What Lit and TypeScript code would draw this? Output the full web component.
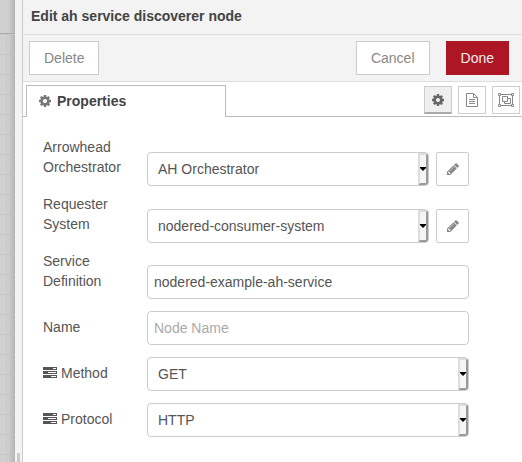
import { LitElement, html, css } from "lit";
import { customElement } from "lit/decorators.js";

const GEAR =
  "M1024 896q0-106-75-181t-181-75-181 75-75 181 75 181 181 75 181-75 75-181zm512-109v222q0 12-8 23t-20 13l-185 28q-19 54-39 91 35 50 107 138 10 12 10 25t-9 23q-27 37-99 108t-94 71q-12 0-26-9l-138-108q-44 23-91 38-16 136-29 186-7 28-36 28h-222q-14 0-24.500-8.500t-11.500-21.500l-28-184q-49-16-90-37l-141 107q-10 9-25 9-14 0-25-11-126-114-165-168-7-10-7-23 0-12 8-23 15-21 51-66.500t54-70.500q-27-50-41-99l-183-27q-13-2-21-12.500t-8-23.500v-222q0-12 8-23t19-13l186-28q14-46 39-92-40-57-107-138-10-12-10-24 0-10 9-23 26-36 98.500-107.500t94.500-71.500q13 0 26 10l138 107q44-23 91-38 16-136 29-186 7-28 36-28h222q14 0 24.500 8.500t11.500 21.500l28 184q49 16 90 37l142-107q9-9 24-9 13 0 25 10 129 119 165 170 7 8 7 22 0 12-8 23-15 21-51 66.500t-54 70.500q26 50 41 98l183 28q13 2 21 12.500t8 23.500z";

const PENCIL =
  "M491 1536l91-91-235-235-91 91v107h128v128h107zm523-928q0-22-22-22-10 0-17 7l-542 542q-7 7-7 17 0 22 22 22 10 0 17-7l542-542q7-7 7-17zm-54-192l416 416-832 832h-416v-416zm683 96q0 53-37 90l-166 166-416-416 166-165q36-38 90-38 53 0 91 38l235 234q37 39 37 91z";

const gear = html`<svg class="gear" viewBox="0 128 1536 1536" aria-hidden="true"><path d=${GEAR} /></svg>`;

const doc = html`<svg class="doc" viewBox="0 0 12 14" aria-hidden="true">
  <path class="line" d="M.5 .5H7.500L11.500 4.500V13.500H.5ZM7.500 .5V4.500H11.500M3 6.500H9M3 8.500H9M3 10.500H9" />
</svg>`;

const group = html`<svg class="group" viewBox="0 0 16 14" aria-hidden="true">
  <path class="line" d="M2.500 1.500H13.500M2.500 12.500H13.500M1.500 2.500V11.500M14.500 2.500V11.500M.5 .5H2.500V2.500H.5ZM13.500 .5H15.500V2.500H13.500ZM.5 11.500H2.500V13.500H.5ZM13.500 11.500H15.500V13.500H13.500ZM4.500 3.500H9.500V8.500H4.500ZM9.500 5.500H12.500V10.500H6.500V8.500" />
</svg>`;

const pencil = html`<svg class="pencil" viewBox="0 0 1792 1792" aria-hidden="true"><path d=${PENCIL} /></svg>`;

const tasks = html`<svg class="tasks" viewBox="0 0 14 11" aria-hidden="true">
  <path fill-rule="evenodd" d="M0 0H14V3H0ZM10 1V2H13V1ZM0 4H14V7H0ZM5 5V6H13V5ZM0 8H14V11H0ZM8 9V10H13V9Z" />
</svg>`;

@customElement("app-root")
export class AppRoot extends LitElement {
  static styles = css`
    :host {
      display: flex;
      min-height: 100vh;
      background: #fff;
      color: #555;
      font: 14px/20px "Liberation Sans", Arial, sans-serif;
    }
    * {
      box-sizing: border-box;
    }
    svg {
      fill: currentColor;
      flex: none;
    }
    .line {
      fill: none;
      stroke: currentColor;
    }
    button,
    input,
    select {
      font: inherit;
      color: inherit;
      margin: 0;
      background: #fff;
      border: 1px solid #ccc;
    }
    .workspace {
      width: 15px;
      flex: none;
      display: flex;
      flex-direction: column;
      background: linear-gradient(90deg, transparent 8px, #0002), #d0d0d0;
    }
    .workspace-tabs {
      height: 34px;
      border-bottom: 1px solid #aaa;
    }
    .canvas {
      flex: 1;
      background:
        linear-gradient(90deg, #c6c6c6 1px, transparent 1px) 6px 0 / 20px 20px,
        linear-gradient(#c6c6c6 1px, transparent 1px) 0 0 / 20px 20px;
    }
    .separator {
      width: 8px;
      flex: none;
      display: flex;
      flex-direction: column;
      justify-content: flex-end;
      padding-left: 2px;
      background: #f3f3f3;
      border-right: 1px solid #ccc;
    }
    .grip {
      width: 3px;
      height: 16px;
      background: #ccc;
    }
    .tray {
      flex: 1;
      min-width: 0;
    }
    h1 {
      margin: 0;
      padding: 6px 8px 8px;
      font-size: 14px;
      line-height: 20px;
      color: #444;
      background: #f3f3f3;
      border-bottom: 1px solid #ddd;
    }
    .toolbar {
      display: flex;
      gap: 16px;
      padding: 6px 13px 6px 6px;
      background: #f3f3f3;
      border-bottom: 1px solid #ddd;
    }
    .toolbar button {
      height: 34px;
      padding: 0 14px;
      color: #888;
    }
    .toolbar .delete {
      margin-right: auto;
    }
    .toolbar .done {
      color: #eee;
      background: #ad1625;
      border-color: #ad1625;
    }
    .tabs {
      display: flex;
      align-items: flex-start;
      padding: 3px 2px 0 3px;
      box-shadow: inset 0 -1px #bbb;
    }
    .tab {
      width: 200px;
      height: 32px;
      display: flex;
      align-items: center;
      gap: 6px;
      padding: 0 12px 2px;
      font-weight: bold;
      color: #444;
      border-color: #bbb;
      border-bottom: none;
      margin-right: auto;
    }
    .tab svg {
      color: #777;
    }
    .tool {
      width: 28px;
      height: 28px;
      margin: 1px 0 0 6px;
      padding: 0;
      display: grid;
      place-items: center;
      color: #888;
    }
    .tool.selected {
      color: #666;
      background: #efefef;
      border-bottom: 2px solid #aaa;
    }
    .gear {
      width: 12px;
      height: 12px;
    }
    .doc {
      width: 12px;
      height: 14px;
    }
    .group {
      width: 16px;
      height: 14px;
    }
    .pencil {
      width: 14px;
      height: 14px;
    }
    .tasks {
      width: 14px;
      height: 11px;
      margin-right: 4px;
    }
    form {
      padding: 20px 53px 20px 20px;
    }
    .row {
      display: flex;
      align-items: flex-end;
      margin-bottom: 12px;
    }
    .row.picker {
      margin-bottom: 8px;
    }
    label {
      width: 104px;
      flex: none;
      padding: 0 20px 8px 0;
    }
    .picker label {
      padding-bottom: 9px;
    }
    .field {
      flex: 1;
      min-width: 0;
      display: grid;
    }
    input,
    select {
      grid-area: 1 / 1;
      width: 100%;
      height: 34px;
      border-radius: 4px;
    }
    input {
      padding: 0 6px;
    }
    input::placeholder {
      color: #aaa;
      opacity: 1;
    }
    select {
      appearance: none;
      padding: 0 20px 0 10px;
    }
    .arrow {
      grid-area: 1 / 1;
      justify-self: end;
      width: 10px;
      margin: 1px;
      display: grid;
      place-items: center;
      pointer-events: none;
      background: #f5f5f5;
      border: 2px solid;
      border-color: #ddd #999 #999 #ddd;
      border-radius: 0 3px 3px 0;
    }
    .arrow svg {
      width: 6px;
      height: 4px;
      color: #000;
    }
    .edit {
      width: 33px;
      height: 34px;
      margin-left: 7px;
      padding: 0;
      display: grid;
      place-items: center;
      color: #888;
      border-radius: 2px;
    }
  `;

  private select(id: string, value: string) {
    return html`<div class="field">
      <select id=${id}><option>${value}</option></select>
      <span class="arrow"><svg viewBox="0 0 6 4" aria-hidden="true"><path d="M0 0H6V1L3 4L0 1Z" /></svg></span>
    </div>`;
  }

  private picker(id: string, label: string, value: string) {
    return html`<div class="row picker">
      <label for=${id}>${label}</label>
      ${this.select(id, value)}
      <button type="button" class="edit" aria-label="Edit ${label}">${pencil}</button>
    </div>`;
  }

  private choice(id: string, label: string, value: string) {
    return html`<div class="row">
      <label for=${id}>${tasks}${label}</label>
      ${this.select(id, value)}
    </div>`;
  }

  render() {
    return html`
      <div class="workspace">
        <div class="workspace-tabs"></div>
        <div class="canvas"></div>
      </div>
      <div class="separator"><div class="grip"></div></div>
      <main class="tray">
        <h1>Edit ah service discoverer node</h1>
        <div class="toolbar">
          <button class="delete">Delete</button>
          <button>Cancel</button>
          <button class="done">Done</button>
        </div>
        <div class="tabs">
          <button class="tab">${gear}Properties</button>
          <button class="tool selected" aria-label="Properties">${gear}</button>
          <button class="tool" aria-label="Description">${doc}</button>
          <button class="tool" aria-label="Appearance">${group}</button>
        </div>
        <form>
          ${this.picker("orchestrator", "Arrowhead Orchestrator", "AH Orchestrator")}
          ${this.picker("requester", "Requester System", "nodered-consumer-system")}
          <div class="row">
            <label for="service">Service Definition</label>
            <div class="field"><input id="service" type="text" value="nodered-example-ah-service" /></div>
          </div>
          <div class="row">
            <label for="name">Name</label>
            <div class="field"><input id="name" type="text" placeholder="Node Name" /></div>
          </div>
          ${this.choice("method", "Method", "GET")}
          ${this.choice("protocol", "Protocol", "HTTP")}
        </form>
      </main>
    `;
  }
}
